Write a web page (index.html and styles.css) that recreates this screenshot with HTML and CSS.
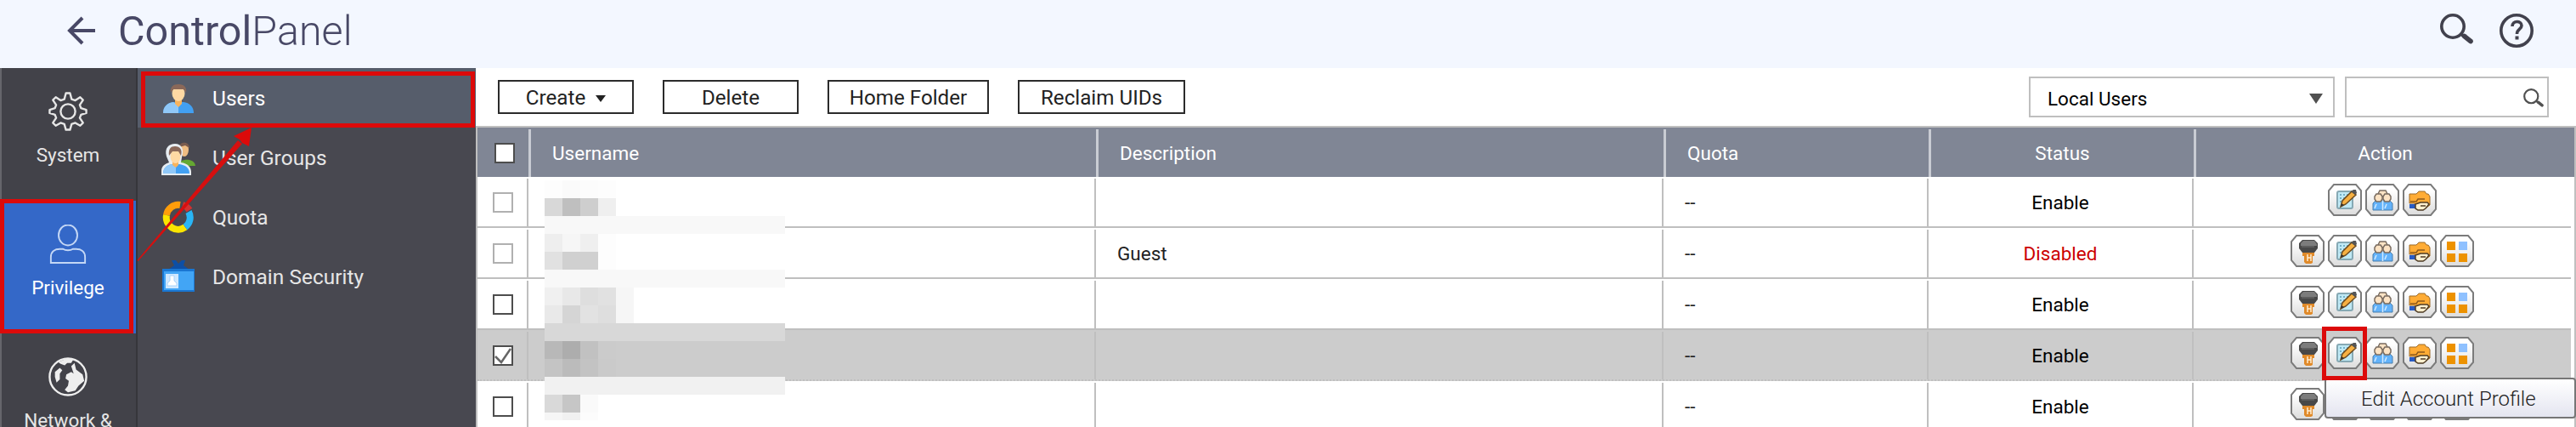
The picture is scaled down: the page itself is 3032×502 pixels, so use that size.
FILE: index.html
```html
<!DOCTYPE html>
<html>

<head>
  <meta charset="utf-8">
  <title>Control Panel</title>
  <link rel="stylesheet" href="styles.css">
</head>

<body>
  <!-- Shared icons -->
  <svg class="defs">
    <defs>
      <linearGradient id="btn" x1="0" y1="0" x2="0" y2="1">
        <stop offset="0.2" stop-color="#fff" />
        <stop offset="1" stop-color="#dcdcdc" />
      </linearGradient>
      <symbol id="frame" viewBox="0 0 40 38">
        <path d="M7 1H33L39 8V30L33 37H7L1 30V8Z" fill="url(#btn)" stroke="#7b7b7b" stroke-width="2" />
      </symbol>
      <symbol id="key" viewBox="0 0 40 38">
        <use href="#frame" />
        <path d="M14 19H28V25H26V33L24 34H18L16 32V25H14Z" fill="#e08a2a" />
        <path d="M20 23V31M24 23V31M20 27H24" stroke="#ffedd0" stroke-width="1.500" />
        <path d="M14 6H28L32 10V16L28 21H14L10 16V10Z" fill="#484848" />
        <path d="M15 7H28L31 11V13H12V10Z" fill="#7c7c7c" />
        <path d="M13 14H28" stroke="#666" stroke-width="1.500" />
      </symbol>
      <symbol id="edit" viewBox="0 0 40 38">
        <use href="#frame" />
        <rect x="11" y="9" width="18" height="20" rx="2" fill="#bfe9f5" stroke="#86a9b4" stroke-width="2" />
        <path d="M14 13H24M14 17H20M14 21H17" stroke="#5d9fb8" stroke-width="1.500" stroke-dasharray="2 2" />
        <path d="M15 27L17 20L28 9L33 13L21 24Z" fill="#f6b042" stroke="#6d4a1d" stroke-width="1.500" />
        <path d="M15 27L16 23L19 25Z" fill="#333" />
        <path d="M27 9L30 7H33L34 11L32 13Z" fill="#555" />
      </symbol>
      <symbol id="group" viewBox="0 0 40 38">
        <use href="#frame" />
        <path d="M9 31V23L12 20H29L32 23V31Z" fill="#62b2fa" stroke="#4a7eac" />
        <path d="M20.500 20V31M13 24L11 29M25 24L23 29" stroke="#d1eaff" stroke-width="1.500" />
        <g fill="#fce3c4" stroke="#796c60" stroke-width="1.500">
          <path d="M17 8H24L26 12L23 15H18L15 12Z" />
          <path d="M13 12H18L20 15V18L18 21H13L11 18V15Z" />
          <path d="M23 12H28L30 15V18L28 21H23L21 18V15Z" />
        </g>
      </symbol>
      <symbol id="share" viewBox="0 0 40 38">
        <use href="#frame" />
        <path d="M8 12H16L19 9H26L28 12H30L32 15V25L28 28H17L14 23H8Z" fill="#ffac35" stroke="#9c6a28" stroke-width="1" />
        <path d="M9 21H16L18 18H26" fill="none" stroke="#8e5a1c" stroke-width="1.500" />
        <path d="M8 24H15V29H8Z" fill="#285bc4" />
        <path d="M15 24L21 22H29L31 24L27 29L24 31H18L15 29Z" fill="#fff0cf" stroke="#4d3b24" stroke-width="1.500" />
        <path d="M21 26H27" stroke="#4d3b24" stroke-width="1.500" />
      </symbol>
      <symbol id="apps" viewBox="0 0 40 38">
        <use href="#frame" />
        <path d="M8 8H18V18H8ZM8 22H18V32H8ZM22 22H32V32H22Z" fill="#ed9200" />
        <path d="M22 8H32V18H22Z" fill="#8fc1ff" />
      </symbol>
      <symbol id="lens" viewBox="0 0 39 36">
        <circle cx="15" cy="15" r="13.200" fill="none" stroke="currentColor" stroke-width="3.600" />
        <path d="M24.500 24L29 27.500" fill="none" stroke="currentColor" stroke-width="3.600" />
        <path d="M28.500 26.500L36 32.500" fill="none" stroke="currentColor" stroke-width="5.600" stroke-linecap="round" />
      </symbol>
    </defs>
  </svg>

  <div class="header">
    <svg class="back" viewBox="0 0 34 34">
      <path d="M18 2L3 17L18 32M3 17H33" fill="none" stroke="#484866" stroke-width="4" />
    </svg>
    <h1><b>Control</b><span>Panel</span></h1>
    <svg class="header-search"><use href="#lens" /></svg>
    <svg class="help" viewBox="0 0 40 40">
      <circle cx="20" cy="20" r="18.200" fill="none" stroke="#41414d" stroke-width="3.600" />
      <path d="M15 15C15 7.500 26 8 26 14C26 18.500 20.500 18 20.500 24" fill="none" stroke="#41414d" stroke-width="3.600" />
      <rect x="18.500" y="26.500" width="4" height="4" fill="#41414d" />
    </svg>
  </div>

  <div class="main">
    <!-- Main categories -->
    <div class="sidebar">
      <div class="category">
        <svg viewBox="0 0 48 48">
          <path fill="none" stroke="#e6e6e6" stroke-width="2.500" stroke-linejoin="round" d="M21.500 1.500H26.500L28.500 9L33 10.500L39 6.500L42.500 10L38.500 16L40 20L46.500 22V26L40 28L38.500 32L42.500 38L39 41.500L33 38L28.500 39.500L26.500 46.500H21.500L19.500 39.500L15 38L9 41.500L5.500 38L9.500 32L8 28L1.500 26V22L8 20L9.500 16L5.500 10L9 6.500L15 10.500L19.500 9Z" />
          <circle cx="24" cy="24" r="9" fill="none" stroke="#e6e6e6" stroke-width="2.500" />
        </svg>
        <span>System</span>
      </div>
      <div class="category active">
        <svg viewBox="0 0 48 48">
          <ellipse cx="24" cy="13" rx="11.500" ry="12.500" fill="none" stroke="#c4d7f5" stroke-width="2" />
          <path d="M3 47V40C3 33 8 30 14 30H18C21 32 27 32 30 30H34C40 30 45 33 45 40V47Z" fill="none" stroke="#c4d7f5" stroke-width="2" />
        </svg>
        <span>Privilege</span>
      </div>
      <div class="category">
        <svg viewBox="0 0 48 48">
          <circle cx="24" cy="24" r="22.500" fill="none" stroke="#eee" stroke-width="2.500" />
          <path d="M12 6L24 1L31 2L28 7L23 7L20 10L15 8ZM8 18L14 13L17 16L14 20V27L10 31L8 24ZM22 21L28 18L31 20L28 11L32 7L34 15L42 21L44 29L37 35L33 41L24 43L20 40L24 35L25 29L21 26Z" fill="#eee" />
        </svg>
        <span>Network &amp;</span>
      </div>
    </div>

    <div class="submenu">
      <div class="item active">
        <svg viewBox="0 0 40 40">
          <path d="M2 37C2 29 7 25 14 24H26C33 25 38 29 38 37Z" fill="#42a0f2" />
          <path d="M2 37C2 29 7 25 14 24L20 28V37Z" fill="#90c8f8" />
          <path d="M16 21H24V26L20 30L16 26Z" fill="#f7b35d" />
          <ellipse cx="20" cy="14" rx="7.500" ry="9" fill="#ffd9a3" />
          <path d="M11 13C10 6 14 3 20 3C27 3 30 7 29 13L26 9H14Z" fill="#8a6859" />
        </svg>
        <span>Users</span>
      </div>
      <div class="item">
        <svg viewBox="0 0 40 40">
          <path d="M20 29C20 20 39 19 40 29Z" fill="#65a832" />
          <ellipse cx="27" cy="10" rx="5" ry="8" fill="#efbd83" />
          <path d="M21 7C21 0 33 0 33 8L28 5Z" fill="#795b4e" />
          <path d="M0 40V35C0 29 4 27 9 25L6 18C3 8 9 3 16 3C24 3 27 10 24 19L23 25C31 26 35 31 35 36V40Z" fill="#e7edf2" />
          <path d="M2 38C2 31 7 28 12 27H21C28 28 33 31 33 38Z" fill="#42a0f2" />
          <path d="M2 38C2 31 7 28 12 27L17 30V38Z" fill="#90c8f8" />
          <path d="M13 23H20V28L17 31L13 28Z" fill="#f7b35d" />
          <ellipse cx="16.500" cy="18" rx="6" ry="8" fill="#ffd9a3" />
          <path d="M9 17C8 9 11 6 16 6C22 6 25 10 23 17L20 12H13Z" fill="#8a6859" />
        </svg>
        <span>User Groups</span>
      </div>
      <div class="item">
        <svg viewBox="0 0 40 40">
          <g fill="none" stroke-width="8">
            <path d="M22 5A14 14 0 0 0 6 17" stroke="#ff9d0a" />
            <path d="M6 17A14 14 0 0 0 28 31" stroke="#fbe500" />
            <path d="M28 31A14 14 0 0 0 32 13" stroke="#29b6f6" />
            <path d="M25 5A14 14 0 0 1 33 11" stroke="#d33131" />
          </g>
        </svg>
        <span>Quota</span>
      </div>
      <div class="item">
        <svg viewBox="0 0 40 40">
          <path d="M8 11L15 6L12 0H17L20 4L24 0H28L26 6L33 11Z" fill="#0d4fa5" />
          <path d="M1 10H39V37H1Z" fill="#1976d2" />
          <path d="M3 13H38V35H3Z" fill="#42a5f5" />
          <path d="M5 16H20V33H5Z" fill="#cfe8ff" />
          <path d="M10 18H15V24L18 27V30H7V27L10 24Z" fill="#fff" stroke="#a9d3fa" />
        </svg>
        <span>Domain Security</span>
      </div>
    </div>

    <div class="content">
      <div class="toolbar">
        <button class="create">Create <i class="caret"></i></button>
        <button>Delete</button>
        <button class="folder">Home Folder</button>
        <button class="reclaim">Reclaim UIDs</button>
        <div class="select">Local Users<i class="caret"></i></div>
        <div class="search"><svg><use href="#lens" /></svg></div>
      </div>

      <div class="table">
        <div class="tr th">
          <div class="td check"><i class="box"></i></div>
          <div class="td">Username</div>
          <div class="td">Description</div>
          <div class="td">Quota</div>
          <div class="td center">Status</div>
          <div class="td center">Action</div>
        </div>
        <div id="rows"></div>
        <div class="mosaic" id="mosaic"></div>
      </div>
    </div>
  </div>

  <!-- Annotations -->
  <div class="tooltip">Edit Account Profile</div>
  <div class="mark mark-users"></div>
  <div class="mark mark-privilege"></div>
  <div class="mark mark-edit"></div>
  <svg class="arrow" viewBox="0 0 140 160">
    <path d="M0.500 156L119 15L124 19L1.500 157Z" fill="#d60f0f" />
    <path d="M135 0L132 22L124 18L121 14L114 10Z" fill="#dc0a0a" />
  </svg>

  <script>
    const rows = [
      { desc: "", status: "Enable", box: "off", icons: ["edit", "group", "share"] },
      { desc: "Guest", status: "Disabled", box: "off", icons: ["key", "edit", "group", "share", "apps"] },
      { desc: "", status: "Enable", box: "", icons: ["key", "edit", "group", "share", "apps"] },
      { desc: "", status: "Enable", box: "checked", icons: ["key", "edit", "group", "share", "apps"] },
      { desc: "", status: "Enable", box: "", icons: ["key", "edit", "group", "share", "apps"] }
    ];

    const tick = '<svg viewBox="0 0 20 20"><path d="M1 11L8 18L19 2" fill="none" stroke="#666" stroke-width="2.500"/></svg>';

    document.getElementById("rows").innerHTML = rows.map(row => `
      <div class="tr ${row.box === "checked" ? "selected" : ""}">
        <div class="td check"><i class="box ${row.box}">${row.box === "checked" ? tick : ""}</i></div>
        <div class="td"></div>
        <div class="td">${row.desc}</div>
        <div class="td">--</div>
        <div class="td center ${row.status.toLowerCase()}">${row.status}</div>
        <div class="td center actions">${row.icons.map(icon => `<svg><use href="#${icon}"/></svg>`).join("")}</div>
      </div>`).join("");

    // Masked user names, one list of shades for each 21px line
    const mosaic = [
      ["#fdfdfd", "#fafafa", "#fcfcfc", "#fdfdfd"],
      ["#d8d8d8", "#bfbfbf", "#cecece", "#efefef"],
      ["#f8f8f8"],
      ["#eeeeee", "#f6f6f6", "#efefef", "#fdfdfd"],
      ["#e1e1e1", "#d0d0d0", "#d0d0d0", "#fdfdfd"],
      ["#f8f8f8"],
      ["#f0f0f0", "#e8e8e8", "#dedede", "#e1e1e1", "#f6f6f6"],
      ["#e9e9e9", "#d5d5d5", "#e2e2e2", "#dedede", "#f6f6f6"],
      ["#d8d8d8"],
      ["#b8b8b8", "#adadad", "#c1c1c1", "#cbcbcb"],
      ["#c4c4c4", "#bbbbbb", "#c3c3c3", "#cacaca"],
      ["#f1f1f1"],
      ["#d9d9d9", "#c6c6c6", "#fafafa"],
      ["#f6f6f6", "#f1f1f1", "#fcfcfc"]
    ];

    document.getElementById("mosaic").innerHTML = mosaic.map(line =>
      `<div class="line ${line.length === 1 ? "bar" : ""}">${line.map(c => `<i style="background:${c}"></i>`).join("")}</div>`
    ).join("");
  </script>
</body>

</html>
```
FILE: styles.css
```css
* {
  box-sizing: border-box;
}

body {
  font-family: Roboto, sans-serif;
  font-size: 22.5px;
  margin: 0;
  width: 3032px;
  height: 502px;
  overflow: hidden;
  position: relative;
  background-color: #fff;
  color: #222;
}

svg {
  display: block;
  flex: none;
}

.defs {
  position: absolute;
  width: 0;
  height: 0;
}

.header {
  display: flex;
  align-items: center;
  height: 80px;
  padding: 0 50px 0 79px;
  background-color: #f3f7ff;
  color: #484866;
}

.back {
  width: 34px;
  height: 34px;
  margin-top: -8px;
}

h1 {
  font-size: 48.5px;
  line-height: 56px;
  font-weight: 300;
  margin: -6px auto 0 26px;
}

.header-search {
  width: 39px;
  height: 36px;
  margin: -12px 31px 0 0;
  color: #41414d;
}

.help {
  width: 40px;
  height: 40px;
  margin-top: -8px;
}

.main {
  display: flex;
  height: 422px;
  overflow: hidden;
}

/* Left menus */
.sidebar {
  width: 162px;
  flex: none;
  background-color: #424249;
  border-left: 2px solid #66666c;
  border-right: 2px solid #36363b;
}

.category {
  display: flex;
  flex-direction: column;
  align-items: center;
  height: 156px;
  padding: 28px 2px 0 0;
  color: #e6e6e6;
}

.category svg {
  width: 48px;
  height: 46px;
  margin-bottom: 14px;
}

.category span {
  line-height: 28px;
}

.category.active {
  background-color: #3468c8;
  color: #fff;
}

.submenu {
  width: 398px;
  flex: none;
  font-size: 24.5px;
  background-color: #484850;
}

.item {
  display: flex;
  align-items: center;
  gap: 20px;
  height: 70px;
  padding: 1px 0 0 28px;
  color: #e6e6e6;
}

.item svg {
  width: 40px;
  height: 40px;
}

.item.active {
  background-color: #565d6b;
  color: #fff;
}

/* Toolbar */
.content {
  flex: 1;
}

.toolbar {
  display: flex;
  align-items: center;
  height: 68px;
  padding: 0 32px 0 26px;
}

button {
  width: 160px;
  height: 40px;
  margin: 0 34px 0 0;
  padding: 1px 0 0;
  font: inherit;
  font-size: 24.2px;
  color: #222;
  background-color: #fff;
  border: 2px solid #2b2b2b;
}

.folder {
  width: 190px;
}

.reclaim {
  width: 197px;
}

.caret {
  display: inline-block;
  border: 6px solid transparent;
  border-top: 8px solid #222;
  border-bottom: 0;
}

.create .caret {
  margin: 0 0 3px 6px;
}

.select,
.search {
  display: flex;
  align-items: center;
  justify-content: space-between;
  height: 48px;
  border: 2px solid #bfbfbf;
}

.select {
  width: 360px;
  margin-left: auto;
  padding: 3px 12px 0 20px;
  color: #000;
}

.select .caret {
  border-width: 12px 8px 0;
  border-top-color: #505050;
}

.search {
  width: 240px;
  margin-left: 12px;
  padding: 1px 4px 0 0;
  justify-content: flex-end;
}

.search svg {
  width: 24px;
  height: 22px;
  color: #505050;
}

/* Users table */
.table {
  position: relative;
  border: 2px solid #bfbfbf;
  border-bottom: 0;
}

.tr {
  display: grid;
  grid-template-columns: 60px 668px 668px 312px 312px 444px;
  height: 60px;
  margin-right: 4px;
  padding-top: 2px;
  border-bottom: 2px solid #bfbfbf;
}

.th {
  grid-template-columns: 63px 668px 668px 312px 312px 445px;
  height: 58px;
  margin: 0;
  border-bottom: 0;
  background-color: #808695;
  color: #fff;
}

.td {
  display: flex;
  align-items: center;
  padding: 0 0 0 25px;
  border-right: 2px solid #bfbfbf;
}

.td:last-child {
  border-right: 0;
}

.th .td {
  border-right: 3px solid #c9ccd3;
}

.th .td:last-child {
  border-right: 0;
}

.td.center {
  justify-content: center;
  padding: 0;
}

.td.check {
  padding-left: 18px;
}

.th .td.check {
  padding-left: 20px;
}

.disabled {
  color: #cc0000;
}

.enable {
  color: #000;
}

.selected {
  background-color: #ccc;
  border-bottom: 2px dotted #bfbfbf;
}

.box {
  width: 24px;
  height: 24px;
  border: 2px solid #4d4d4d;
  background-color: #fff;
}

.box.off {
  border-color: #b0b0b0;
}

.box svg {
  width: 20px;
  height: 20px;
}

.actions {
  gap: 4px;
}

.actions svg {
  width: 40px;
  height: 38px;
  margin-top: -6px;
}

.mosaic {
  position: absolute;
  left: 79px;
  top: 62px;
}

.line {
  display: flex;
  height: 21px;
}

.line i {
  width: 21px;
}

.line.bar i {
  width: 283px;
}

.line:last-child {
  height: 9px;
}

/* Annotations */
.mark {
  position: absolute;
  border: 5px solid #dc0a0a;
}

.mark-users {
  left: 166px;
  top: 84px;
  width: 393px;
  height: 66px;
}

.mark-privilege {
  left: 0;
  top: 234px;
  width: 157px;
  height: 158px;
}

.mark-edit {
  left: 2733px;
  top: 384px;
  width: 53px;
  height: 63px;
}

.arrow {
  position: absolute;
  left: 161px;
  top: 150px;
  width: 140px;
  height: 160px;
}

.tooltip {
  position: absolute;
  left: 2736px;
  top: 444px;
  width: 296px;
  height: 48px;
  line-height: 46px;
  padding-left: 41px;
  font-size: 24px;
  font-weight: 300;
  white-space: nowrap;
  color: #222;
  background: linear-gradient(#fff, #e4e5f0);
  border: 2px solid #767676;
  border-radius: 4px;
}
```
